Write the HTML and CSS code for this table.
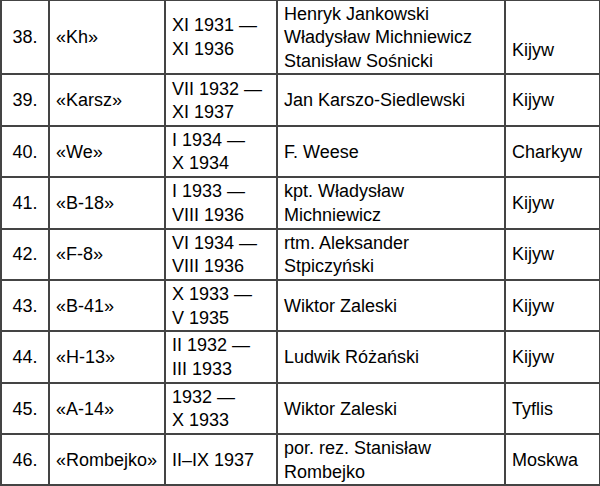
FILE: index.html
```html
<!DOCTYPE html>
<html lang="pl">
<head>
<meta charset="utf-8">
<link rel="stylesheet" href="styles.css">
</head>
<body>
<table class="list">
  <colgroup>
    <col class="c-no">
    <col class="c-code">
    <col class="c-date">
    <col class="c-name">
    <col class="c-city">
  </colgroup>
  <tbody>
    <tr><td class="no">38.</td><td>«Kh»</td><td>XI 1931 —<br>XI 1936</td><td>Henryk Jankowski<br>Władysław Michniewicz<br>Stanisław Sośnicki</td><td class="low">Kijyw</td></tr>
    <tr><td class="no">39.</td><td>«Karsz»</td><td>VII 1932 —<br>XI 1937</td><td>Jan Karszo-Siedlewski</td><td>Kijyw</td></tr>
    <tr><td class="no">40.</td><td>«We»</td><td>I 1934 —<br>X 1934</td><td>F. Weese</td><td>Charkyw</td></tr>
    <tr><td class="no">41.</td><td>«B-18»</td><td>I 1933 —<br>VIII 1936</td><td>kpt. Władysław<br>Michniewicz</td><td>Kijyw</td></tr>
    <tr><td class="no">42.</td><td>«F-8»</td><td>VI 1934 —<br>VIII 1936</td><td>rtm. Aleksander<br>Stpiczyński</td><td>Kijyw</td></tr>
    <tr><td class="no">43.</td><td>«B-41»</td><td>X 1933 —<br>V 1935</td><td>Wiktor Zaleski</td><td>Kijyw</td></tr>
    <tr><td class="no">44.</td><td>«H-13»</td><td>II 1932 —<br>III 1933</td><td>Ludwik Różański</td><td>Kijyw</td></tr>
    <tr><td class="no">45.</td><td>«A-14»</td><td>1932 —<br>X 1933</td><td>Wiktor Zaleski</td><td>Tyflis</td></tr>
    <tr><td class="no">46.</td><td>«Rombejko»</td><td>II–IX 1937</td><td>por. rez. Stanisław<br>Rombejko</td><td>Moskwa</td></tr>
  </tbody>
</table>
</body>
</html>
```

FILE: styles.css
```css
html, body {
  margin: 0;
  padding: 0;
  background: #ffffff;
}

body {
  width: 600px;
  height: 486px;
  overflow: hidden;
}

.list {
  border-collapse: collapse;
  table-layout: fixed;
  width: 599px;
  margin-top: -1.5px;
  font-family: "Liberation Sans", Arial, sans-serif;
  font-size: 18px;
  line-height: 23.5px;
  color: #000;
}

.c-no { width: 48px; }
.c-code { width: 116px; }
.c-date { width: 112px; }
.c-name { width: 228px; }
.c-city { width: 95px; }

.list td {
  border: 2px solid #444;
  padding: 2.2px 6px 0.2px;
  vertical-align: middle;
  white-space: nowrap;
}

.list td.no {
  text-align: center;
  padding-left: 2px;
  padding-right: 2px;
}

.list td.low {
  padding-top: 28px;
}
```
